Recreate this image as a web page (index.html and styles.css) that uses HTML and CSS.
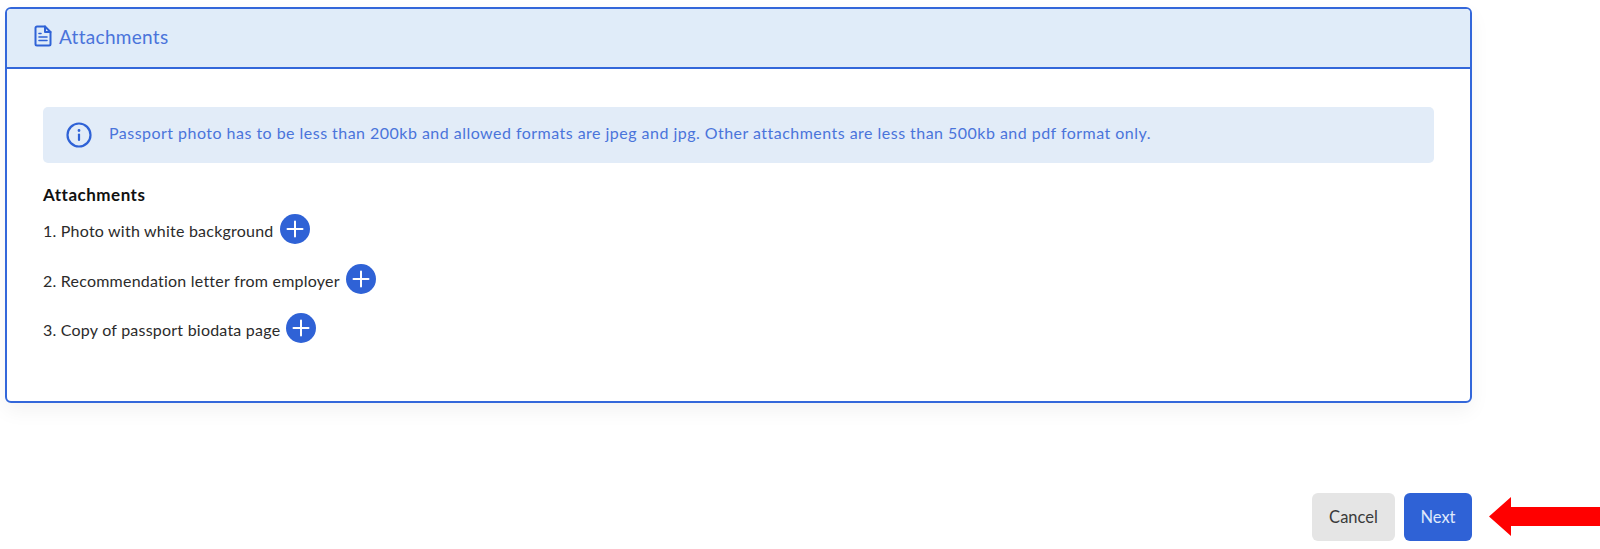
FILE: index.html
```html
<!DOCTYPE html>
<html lang="en">
<head>
<meta charset="utf-8">
<title>Attachments</title>
<link rel="stylesheet" href="styles.css">
</head>
<body>
<main class="page">
  <section class="card">
    <header class="card-head">
      <svg class="doc-icon" viewBox="0 0 18 22" width="18" height="22" fill="none" stroke="currentColor" stroke-width="2" stroke-linejoin="round" stroke-linecap="round">
        <path d="M3 1.500h8l5.500 5.500v12a1.500 1.500 0 0 1-1.500 1.500H3a1.500 1.500 0 0 1-1.500-1.500V3A1.500 1.500 0 0 1 3 1.500z"/>
        <path d="M11 1.500V7h5.500"/>
        <path d="M5 8.500h2M5 12h8M5 15.500h8" stroke-width="1.600"/>
      </svg>
      <h2 class="card-title">Attachments</h2>
    </header>
    <div class="card-body">
      <div class="alert">
        <svg class="info-icon" viewBox="0 0 26 26" width="26" height="26" fill="none" stroke="currentColor" stroke-width="2.200" stroke-linecap="round">
          <circle cx="13" cy="13" r="11.500"/>
          <path d="M13 12.500v5.500"/>
          <circle cx="13" cy="8.500" r="0.700" stroke-width="1.400" fill="currentColor"/>
        </svg>
        <p class="alert-text">Passport photo has to be less than 200kb and allowed formats are jpeg and jpg. Other attachments are less than 500kb and pdf format only.</p>
      </div>
      <h3 class="section-title">Attachments</h3>
      <ol class="files">
        <li class="file"><span>1. Photo with white background</span><button class="add" type="button" aria-label="Add"><svg viewBox="0 0 30 30" width="30" height="30"><path d="M15 7.500v15M7.500 15h15" stroke="#fff" stroke-width="2" stroke-linecap="round"/></svg></button></li>
        <li class="file"><span>2. Recommendation letter from employer</span><button class="add" type="button" aria-label="Add"><svg viewBox="0 0 30 30" width="30" height="30"><path d="M15 7.500v15M7.500 15h15" stroke="#fff" stroke-width="2" stroke-linecap="round"/></svg></button></li>
        <li class="file"><span>3. Copy of passport biodata page</span><button class="add" type="button" aria-label="Add"><svg viewBox="0 0 30 30" width="30" height="30"><path d="M15 7.500v15M7.500 15h15" stroke="#fff" stroke-width="2" stroke-linecap="round"/></svg></button></li>
      </ol>
    </div>
  </section>
  <div class="actions">
    <button class="btn btn-cancel" type="button">Cancel</button>
    <button class="btn btn-next" type="button">Next</button>
  </div>
</main>
<svg class="arrow" viewBox="0 0 111 39" width="111" height="39"><path d="M0 19.500L22 0V10H111V29H22V39Z" fill="#ff0000"/></svg>
</body>
</html>
```

FILE: styles.css
```css
* { box-sizing: border-box; }
html, body { margin: 0; padding: 0; }
body {
  background: #fff;
  font-family: "Lato", "Noto Sans", sans-serif;
  height: 549px;
  overflow: hidden;
  position: relative;
}
.page { width: 1467px; margin: 7px 0 0 5px; }
.card {
  height: 396px;
  border: 2px solid #3367da;
  border-radius: 6px;
  box-shadow: 0 8px 20px rgba(0, 0, 0, 0.05);
  overflow: hidden;
}
.card-head {
  height: 60px;
  background: #e0ecf9;
  border-bottom: 2px solid #3367da;
  display: flex;
  align-items: center;
  gap: 7px;
  padding: 0 0 4px 27px;
  color: #2f62d6;
}
.card-title { margin: 0; font-size: 19px; font-weight: 400; color: #4a74db; letter-spacing: 0.300px; }
.card-body { padding: 38px 36px 0; }
.alert {
  height: 56px;
  background: #e2ecf8;
  border-radius: 5px;
  display: flex;
  align-items: center;
  padding-left: 23px;
  gap: 17px;
  color: #2f62d6;
}
.alert-text { margin: 0 0 6px; font-size: 16px; color: #4a74db; letter-spacing: 0.470px; }
.section-title { margin: 22px 0 0; font-size: 17px; font-weight: 700; color: #111; line-height: 20px; letter-spacing: 0.500px; }
.files { list-style: none; margin: 9px 0 0; padding: 0; }
.file {
  height: 30px;
  margin-bottom: 19.500px;
  display: flex;
  align-items: center;
  gap: 6px;
  font-size: 16px;
  letter-spacing: 0.220px;
  color: #2b2b2b;
}
.file span { padding-top: 3px; }
.add {
  width: 30px;
  height: 30px;
  padding: 0;
  border: 0;
  border-radius: 50%;
  background: #2f62d6;
  display: block;
}
.add svg { display: block; }
.actions {
  display: flex;
  justify-content: flex-end;
  gap: 9px;
  margin-top: 90px;
}
.btn {
  height: 48px;
  border: 0;
  border-radius: 6px;
  font-family: inherit;
  font-size: 16.500px;
  padding: 0;
}
.btn-cancel { width: 83px; background: #e5e5e5; color: #3a3a3a; }
.btn-next { width: 68px; background: #2f62d6; color: #dfe8fb; }
.arrow { position: absolute; left: 1489px; top: 497px; }
```
